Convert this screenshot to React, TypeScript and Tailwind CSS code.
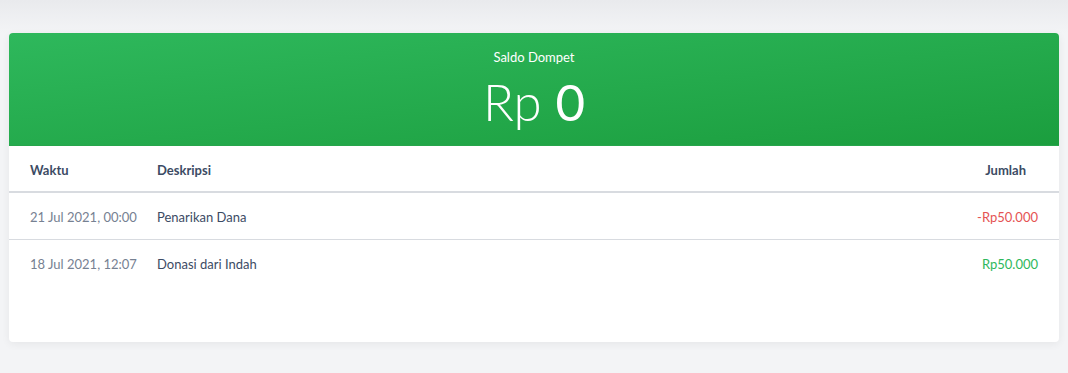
import React from 'react';

const transactions = [
  { time: '21 Jul 2021, 00:00', desc: 'Penarikan Dana', amount: '-Rp50.000', out: true },
  { time: '18 Jul 2021, 12:07', desc: 'Donasi dari Indah', amount: 'Rp50.000', out: false },
];

const App: React.FC = () => {
  return (
    <div
      className="min-h-[373px] bg-[#f3f4f6] text-[13px] text-[#3c4b64]"
      style={{ fontFamily: 'Lato, "Noto Sans", sans-serif' }}
    >
      <div className="h-[33px] bg-gradient-to-b from-[#e9eaed] to-[#f3f4f6]" />
      <div className="mx-[9px] h-[309px] rounded-[4px] bg-white shadow-[0_2px_8px_rgba(0,0,0,0.06)] overflow-hidden">
        <div className="flex h-[113px] flex-col items-center border-b border-[#27a54b] bg-gradient-to-br from-[#2eb85c] to-[#1b9e3e] text-white">
          <div className="mt-[16px] text-[13px] leading-[16px]">Saldo Dompet</div>
          <div className="mt-[7px] text-[51px] leading-[60px]">
            <span className="font-light">Rp </span>
            <span className="font-normal">0</span>
          </div>
        </div>
        <table className="w-full border-collapse">
          <thead>
            <tr className="h-[46px] border-b-2 border-[#d8dbe0]">
              <th className="w-[148px] whitespace-nowrap pl-[21px] pt-[4px] text-left font-bold">Waktu</th>
              <th className="pt-[4px] text-left font-bold">Deskripsi</th>
              <th className="pr-[33px] pt-[4px] text-right font-bold">Jumlah</th>
            </tr>
          </thead>
          <tbody>
            {transactions.map((t, i) => (
              <tr key={i} className={`h-[47px] ${i === 0 ? 'border-b border-[#d8dbe0]' : ''}`}>
                <td className="whitespace-nowrap pl-[21px] pt-[4px] text-[#768192]">{t.time}</td>
                <td className="pt-[4px]">{t.desc}</td>
                <td className={`pr-[21px] pt-[4px] text-right ${t.out ? 'text-[#e55353]' : 'text-[#2eb85c]'}`}>
                  {t.amount}
                </td>
              </tr>
            ))}
          </tbody>
        </table>
      </div>
    </div>
  );
};

export default App;
